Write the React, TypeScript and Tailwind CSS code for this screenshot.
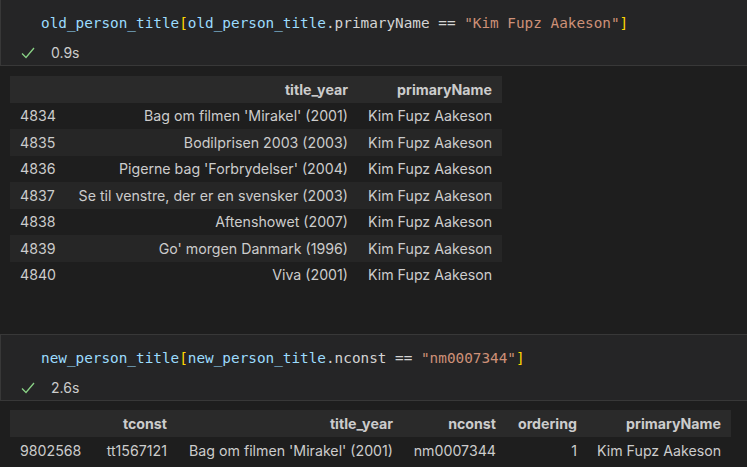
import React from "react";

const mono = { fontFamily: '"DejaVu Sans Mono", "Liberation Mono", monospace' };
const sans = { fontFamily: 'Inter, "Noto Sans", sans-serif' };

function Check() {
  return (
    <svg width="14" height="12" viewBox="0 0 14 12" className="shrink-0">
      <polyline points="1,6.5 5,10.5 13,1" fill="none" stroke="#89d185" strokeWidth="1.3" />
    </svg>
  );
}

function CodeCell({ children, time }: { children: React.ReactNode; time: string }) {
  return (
    <div className="h-[67px] bg-[#252526] border-y border-l border-[#383838] relative">
      <div className="absolute left-[40px] top-[13px] text-[14.35px] leading-[20px] text-[#d4d4d4] whitespace-pre" style={mono}>
        {children}
      </div>
      <div className="absolute left-[20px] top-[42px] flex items-center gap-[16px] text-[14px] text-[#cccccc]" style={sans}>
        <Check />
        <span>{time}</span>
      </div>
    </div>
  );
}

type Col = { name: string; w: number };

function Table({ cols, rows, rowH }: { cols: Col[]; rows: string[][]; rowH: string }) {
  const total = cols.reduce((s, c) => s + c.w, 0);
  return (
    <table
      className="ml-[10px] table-fixed border-collapse text-[14.2px] text-[#cccccc]"
      style={{ ...sans, width: total }}
    >
      <colgroup>
        {cols.map((c, i) => (
          <col key={i} style={{ width: c.w }} />
        ))}
      </colgroup>
      <thead>
        <tr className={`bg-[#2a2a2a] ${rowH}`}>
          {cols.map((c, i) => (
            <th key={i} className={`px-[10px] font-bold whitespace-nowrap ${i === 0 ? "text-left" : "text-right"}`}>
              {c.name}
            </th>
          ))}
        </tr>
      </thead>
      <tbody>
        {rows.map((r, ri) => (
          <tr key={ri} className={`${rowH} ${ri % 2 === 1 ? "bg-[#262626]" : ""}`}>
            {r.map((v, i) => (
              <td key={i} className={`px-[10px] whitespace-nowrap ${i === 0 ? "text-left" : "text-right"}`}>
                {v}
              </td>
            ))}
          </tr>
        ))}
      </tbody>
    </table>
  );
}

const name = "Kim Fupz Aakeson";

export default function App() {
  return (
    <div className="w-[747px] h-[467px] overflow-hidden bg-[#1e1e1e]">
      <div className="-mt-px">
        <CodeCell time="0.9s">
          <span className="text-[#9cdcfe]">old_person_title</span>
          <span className="text-[#ffd700]">[</span>
          <span className="text-[#9cdcfe]">old_person_title</span>.primaryName == <span className="text-[#ce9178]">"Kim Fupz Aakeson"</span>
          <span className="text-[#ffd700]">]</span>
        </CodeCell>
      </div>
      <div className="pt-[10px] h-[268px]">
        <Table
          rowH="h-[26.5px]"
          cols={[
            { name: "", w: 56 },
            { name: "title_year", w: 292 },
            { name: "primaryName", w: 144 },
          ]}
          rows={[
            ["4834", "Bag om filmen 'Mirakel' (2001)", name],
            ["4835", "Bodilprisen 2003 (2003)", name],
            ["4836", "Pigerne bag 'Forbrydelser' (2004)", name],
            ["4837", "Se til venstre, der er en svensker (2003)", name],
            ["4838", "Aftenshowet (2007)", name],
            ["4839", "Go' morgen Danmark (1996)", name],
            ["4840", "Viva (2001)", name],
          ]}
        />
      </div>
      <CodeCell time="2.6s">
        <span className="text-[#9cdcfe]">new_person_title</span>
        <span className="text-[#ffd700]">[</span>
        <span className="text-[#9cdcfe]">new_person_title</span>.nconst == <span className="text-[#ce9178]">"nm0007344"</span>
        <span className="text-[#ffd700]">]</span>
      </CodeCell>
      <div className="pt-[9px]">
        <Table
          rowH="h-[27px]"
          cols={[
            { name: "", w: 83 },
            { name: "tconst", w: 84 },
            { name: "title_year", w: 226 },
            { name: "nconst", w: 103 },
            { name: "ordering", w: 81 },
            { name: "primaryName", w: 144 },
          ]}
          rows={[["9802568", "tt1567121", "Bag om filmen 'Mirakel' (2001)", "nm0007344", "1", name]]}
        />
      </div>
    </div>
  );
}
